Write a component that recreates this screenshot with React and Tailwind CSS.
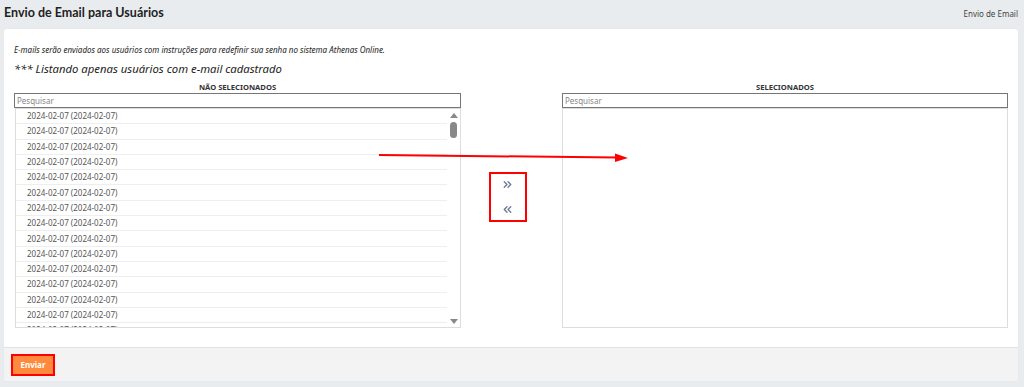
import { useState } from 'react';
import { ChevronsRight, ChevronsLeft } from 'lucide-react';

const rows = Array.from({ length: 15 }, () => '2024-02-07 (2024-02-07)');

function ColumnHeader({ children }) {
  return (
    <div className="text-center text-[7.6px] font-bold text-[#333] leading-[12px] h-[12px]">{children}</div>
  );
}

function SearchBox() {
  return (
    <div className="h-[15px] border border-[#767676] bg-white flex items-center px-[2px]">
      <span className="text-[8px] text-[#888] leading-none">Pesquisar</span>
    </div>
  );
}

function ScrollCol() {
  return (
    <div className="w-[13px] shrink-0 flex flex-col items-center pt-[4px] pb-[3px]">
      <div className="w-0 h-0 border-l-[4px] border-r-[4px] border-b-[5px] border-l-transparent border-r-transparent border-b-[#888]" />
      <div className="mt-[4px] w-[7px] h-[16px] rounded-[4px] bg-[#888]" />
      <div className="flex-1" />
      <div className="w-0 h-0 border-l-[4px] border-r-[4px] border-t-[5px] border-l-transparent border-r-transparent border-t-[#888]" />
    </div>
  );
}

export default function App() {
  const [selected] = useState([]);

  return (
    <div className="w-[1024px] h-[387px] bg-[#e9ecef] relative overflow-hidden" style={{ fontFamily: '"Noto Sans", Lato, sans-serif' }}>
      {/* header */}
      <div className="flex items-center justify-between pl-[4px] pr-[6px] h-[27px]">
        <h1 className="text-[12.5px] font-bold text-[#222] leading-none" style={{ fontFamily: 'Lato, sans-serif' }}>Envio de Email para Usuários</h1>
        <span className="text-[8px] text-[#444]">Envio de Email</span>
      </div>

      {/* card */}
      <div className="mx-[4px] mt-[2px] w-[1014px] bg-white rounded-[3px] shadow-[0_0_1px_rgba(0,0,0,0.1)] flex flex-col">
        <div className="px-[10px] pt-[16px] pb-[19px]">
          <p className="text-[8px] italic text-[#222] leading-[10px]">E-mails serão enviados aos usuários com instruções para redefinir sua senha no sistema Athenas Online.</p>
          <p className="mt-[6px] text-[11.3px] italic text-[#222] leading-[16px]">*** Listando apenas usuários com e-mail cadastrado</p>

          <div className="flex mt-[4px]">
            {/* left */}
            <div className="w-[447px]">
              <ColumnHeader>NÃO SELECIONADOS</ColumnHeader>
              <SearchBox />
              <div className="ml-[1px] h-[220px] border border-[#ddd] flex overflow-hidden">
                <div className="flex-1 overflow-hidden">
                  {rows.map((r, i) => (
                    <div key={i} className="h-[15.3px] border-b border-[#eee] pl-[11px] flex items-center text-[8px] text-[#555] leading-none">
                      {r}
                    </div>
                  ))}
                </div>
                <ScrollCol />
              </div>
            </div>

            {/* middle */}
            <div className="w-[101px] flex justify-center pt-[91px]">
              <div className="w-[38px] h-[50px] border-2 border-[#ff0000] flex flex-col items-center gap-[12px] pt-[4px] text-[#6b7a99] ml-[-8px]">
                <ChevronsRight size={13} strokeWidth={2.5} />
                <ChevronsLeft size={13} strokeWidth={2.5} />
              </div>
            </div>

            {/* right */}
            <div className="w-[446px]">
              <ColumnHeader>SELECIONADOS</ColumnHeader>
              <SearchBox />
              <div className="h-[220px] border border-[#ddd]">
                {selected.map((r, i) => (
                  <div key={i}>{r}</div>
                ))}
              </div>
            </div>
          </div>
        </div>

        {/* footer */}
        <div className="bg-[#f3f3f3] border-t border-[#e2e2e2] h-[34px] rounded-b-[3px] flex items-center pl-[7px]">
          <button className="h-[22px] w-[44px] border-2 border-[#ff0000] bg-[#ff8a3d] text-white text-[8px] font-bold">Enviar</button>
        </div>
      </div>

      {/* annotation arrow */}
      <svg className="absolute left-0 top-0 pointer-events-none" width="1024" height="387">
        <line x1="379" y1="155" x2="617" y2="157.5" stroke="#ff0000" strokeWidth="2" />
        <polygon points="628,158 615,153.5 615,162" fill="#ff0000" />
      </svg>
    </div>
  );
}
